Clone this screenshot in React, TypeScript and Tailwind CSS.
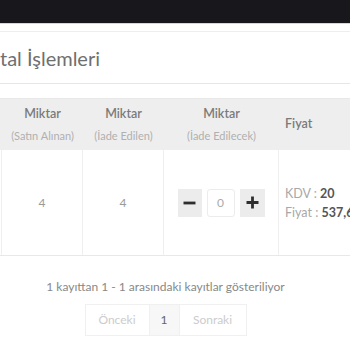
const font = { fontFamily: "Lato, 'Noto Sans', sans-serif" };

function Stepper() {
  return (
    <div className="flex items-center justify-center gap-[5px]">
      <button className="flex h-[28px] w-[24px] items-center justify-center bg-[#ececec]">
        <svg width="13" height="12" viewBox="0 0 13 12">
          <path d="M0.5 6h12" stroke="#2e2e2e" strokeWidth="2.8" />
        </svg>
      </button>
      <div className="flex h-[28px] w-[28px] items-center justify-center rounded-[3px] border border-[#ececec] bg-white text-[12px] text-[#aaaaaa]">
        0
      </div>
      <button className="flex h-[28px] w-[25px] items-center justify-center bg-[#ececec]">
        <svg width="13" height="13" viewBox="0 0 13 13">
          <path d="M0.5 6.5h12M6.5 0.5v12" stroke="#2e2e2e" strokeWidth="2.8" />
        </svg>
      </button>
    </div>
  );
}

export default function App() {
  return (
    <div className="h-[350px] w-[350px] overflow-hidden bg-white" style={font}>
      <div className="h-[23px] bg-[#17171c]" />
      <div className="h-[1px] bg-[#d6d6d6]" />
      <div className="h-[7px]" />
      <div className="border-t border-[#eeeeee]">
        <div className="flex h-[52px] items-center border-b border-[#e6e6e6] text-[20px] text-[#6f6f6f]">
          tal İşlemleri
        </div>
        <div className="h-[14px]" />
        <div className="-ml-[100px] w-[500px] border-t border-[#e8e8e8]">
          <div className="flex h-[51px] bg-[#eeeeee] text-center">
            <div className="w-[102px]" />
            <div className="flex w-[81px] flex-col items-center justify-center">
              <span className="text-[12.5px] font-semibold text-[#7a7a7a]">Miktar</span>
              <span className="mt-[4px] text-[11px] text-[#b0b0b0]">(Satın Alınan)</span>
            </div>
            <div className="flex w-[81px] flex-col items-center justify-center">
              <span className="text-[12.5px] font-semibold text-[#7a7a7a]">Miktar</span>
              <span className="mt-[4px] text-[11px] text-[#b0b0b0]">(İade Edilen)</span>
            </div>
            <div className="flex w-[115px] flex-col items-center justify-center">
              <span className="text-[12.5px] font-semibold text-[#7a7a7a]">Miktar</span>
              <span className="mt-[4px] text-[11px] text-[#b0b0b0]">(İade Edilecek)</span>
            </div>
            <div className="flex flex-1 items-center pl-[6px] text-[12.5px] font-semibold text-[#7a7a7a]">
              Fiyat
            </div>
          </div>
          <div className="flex h-[106px] border-b border-[#e8e8e8] text-[12px]">
            <div className="w-[102px] border-r border-[#efefef]" />
            <div className="flex w-[81px] items-center justify-center border-r border-[#efefef] text-[#9a9a9a]">4</div>
            <div className="flex w-[81px] items-center justify-center border-r border-[#efefef] text-[#9a9a9a]">4</div>
            <div className="flex w-[115px] items-center justify-center border-r border-[#efefef]">
              <Stepper />
            </div>
            <div className="flex flex-1 flex-col justify-center pl-[6px] text-[12.5px] leading-[19px] text-[#a8a8a8]">
              <div>
                KDV : <span className="font-bold text-[#555555]">20</span>
              </div>
              <div>
                Fiyat : <span className="font-bold text-[#555555]">537,60</span>
              </div>
            </div>
          </div>
        </div>
        <div className="mt-[22px] w-[331px] text-center text-[12px] text-[#888888]">
          1 kayıttan 1 - 1 arasındaki kayıtlar gösteriliyor
        </div>
        <div className="mt-[8px] flex w-[331px] justify-center">
          <div className="flex h-[32px] border border-[#f0f0f0] text-[12px]">
            <div className="flex w-[63px] items-center justify-center text-[#cccccc]">Önceki</div>
            <div className="flex w-[31px] items-center justify-center border-x border-[#f0f0f0] bg-[#f7f7f7] text-[#666666]">1</div>
            <div className="flex w-[66px] items-center justify-center text-[#cccccc]">Sonraki</div>
          </div>
        </div>
      </div>
    </div>
  );
}
